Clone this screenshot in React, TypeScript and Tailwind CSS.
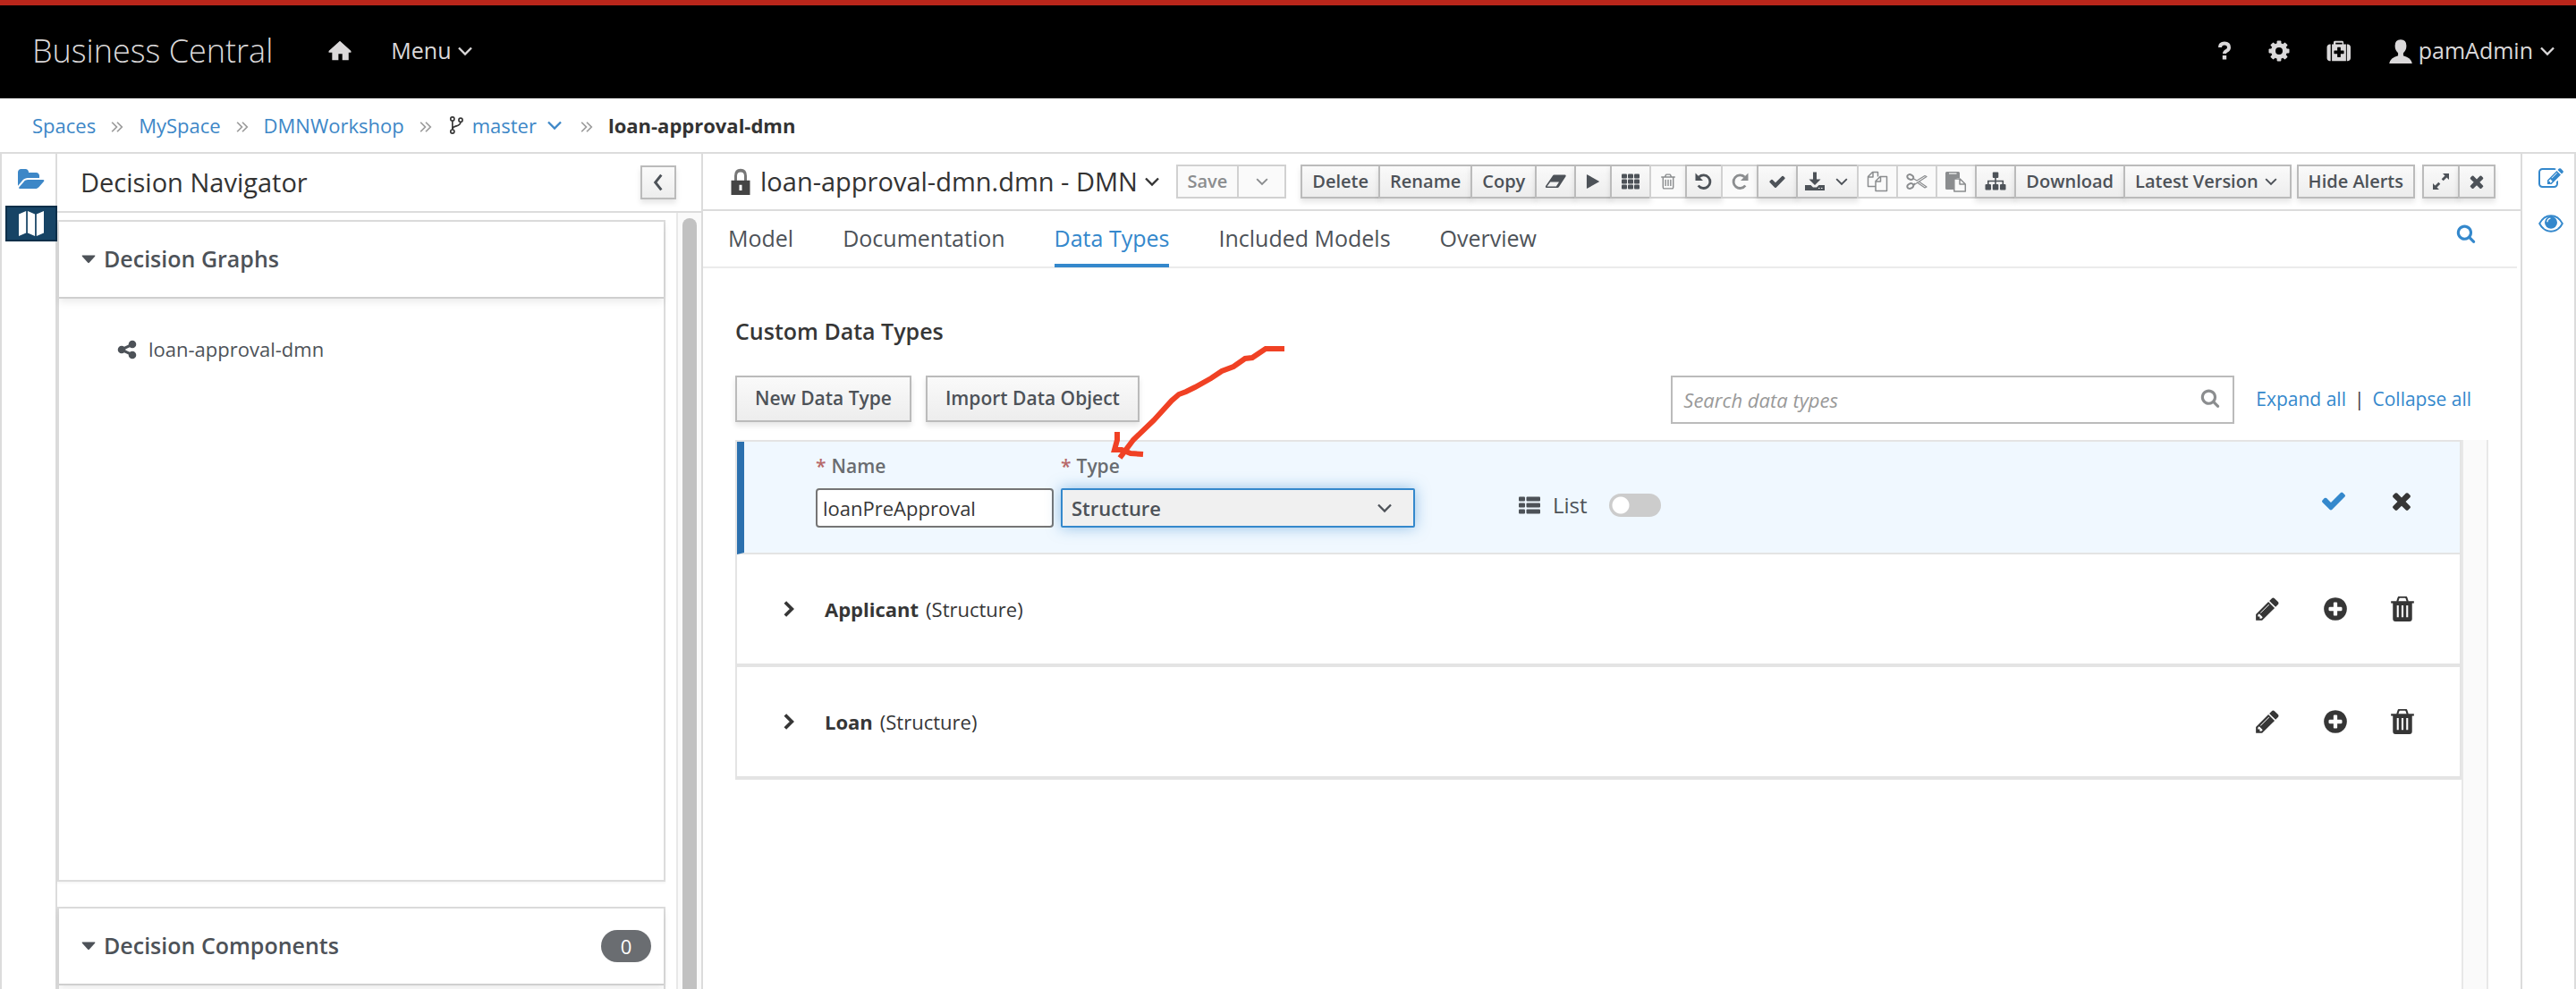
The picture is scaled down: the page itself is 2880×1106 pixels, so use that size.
import type { ReactNode } from "react";

const paths = {
  check: "M1671 566q0 40-28 68l-724 724-136 136q-28 28-68 28t-68-28l-136-136-362-362q-28-28-28-68t28-68l136-136q28-28 68-28t68 28l294 295 656-657q28-28 68-28t68 28l136 136q28 28 28 68z",
  times: "M1490 1322q0 40-28 68l-136 136q-28 28-68 28t-68-28l-294-294-294 294q-28 28-68 28t-68-28l-136-136q-28-28-28-68t28-68l294-294-294-294q-28-28-28-68t28-68l136-136q28-28 68-28t68 28l294 294 294-294q28-28 68-28t68 28l136 136q28 28 28 68t-28 68l-294 294 294 294q28 28 28 68z",
  play: "M1576 927l-1328 738q-23 13-39.500 3t-16.500-36v-1472q0-26 16.500-36t39.500 3l1328 738q23 13 23 31t-23 31z",
  trashOutline: "M704 736v576q0 14-9 23t-23 9h-64q-14 0-23-9t-9-23v-576q0-14 9-23t23-9h64q14 0 23 9t9 23zm256 0v576q0 14-9 23t-23 9h-64q-14 0-23-9t-9-23v-576q0-14 9-23t23-9h64q14 0 23 9t9 23zm256 0v576q0 14-9 23t-23 9h-64q-14 0-23-9t-9-23v-576q0-14 9-23t23-9h64q14 0 23 9t9 23zm128 724v-948h-896v948q0 22 7 40.500t14.500 27 10.500 8.500h832q3 0 10.500-8.500t14.500-27 7-40.500zm-672-1076h448l-48-117q-7-9-17-11h-317q-10 2-17 11zm928 32v64q0 14-9 23t-23 9h-96v948q0 83-47 143.500t-113 60.500h-832q-66 0-113-58.500t-47-141.500v-952h-96q-14 0-23-9t-9-23v-64q0-14 9-23t23-9h309l70-167q15-37 54-63t79-26h320q40 0 79 26t54 63l70 167h309q14 0 23 9t9 23z",
  share: "M1344 1024q133 0 226.500 93.500t93.500 226.500-93.500 226.500-226.500 93.500-226.500-93.500-93.500-226.500q0-12 2-34l-360-180q-92 86-218 86-133 0-226.500-93.500t-93.500-226.500 93.500-226.500 226.500-93.500q126 0 218 86l360-180q-2-22-2-34 0-133 93.500-226.500t226.500-93.500 226.500 93.500 93.500 226.500-93.500 226.500-226.500 93.500q-126 0-218-86l-360 180q2 22 2 34t-2 34l360 180q92-86 218-86z",
  search: "M1216 832q0-185-131.500-316.500t-316.500-131.500-316.500 131.500-131.500 316.500 131.500 316.500 316.500 131.500 316.500-131.500 131.500-316.500zm512 832q0 52-38 90t-90 38q-54 0-90-38l-343-342q-179 124-399 124-143 0-273.500-55.500t-225-150-150-225-55.500-273.500 55.500-273.500 150-225 225-150 273.500-55.500 273.500 55.500 225 150 150 225 55.500 273.500q0 220-124 399l343 343q37 37 37 90z",
  folder: "M1879 952q0 31-31 66l-336 396q-43 51-120.500 86.500t-143.500 35.500h-1088q-34 0-60.500-13t-26.500-43q0-31 31-66l336-396q43-51 120.500-86.500t143.500-35.500h1088q34 0 60.500 13t26.500 43zm-343-344v160h-832q-94 0-197 47.500t-164 119.500l-337 396-5 6q0-4-.5-12.500t-.5-12.500v-960q0-92 66-158t158-66h320q92 0 158 66t66 158v32h544q92 0 158 66t66 158z",
  edit: "M888 1184l116-116-152-152-116 116v56h96v96h56zm440-720q-16-16-33 1l-350 350q-17 17-1 33t33-1l350-350q17-17 1-33zm80 594v190q0 119-84.500 203.500t-203.500 84.500h-832q-119 0-203.500-84.500t-84.500-203.500v-832q0-119 84.500-203.500t203.500-84.500h832q63 0 117 25 15 7 18 23 3 17-9 29l-49 49q-14 14-32 8-23-6-45-6h-832q-66 0-113 47t-47 113v832q0 66 47 113t113 47h832q66 0 113-47t47-113v-126q0-13 9-22l64-64q15-15 35-7t20 29zm-96-738l288 288-672 672h-288v-288zm444 132l-92 92-288-288 92-92q28-28 68-28t68 28l152 152q28 28 28 68t-28 68z",
  medkit: "M1280 1088v-192q0-14-9-23t-23-9h-224v-224q0-14-9-23t-23-9h-192q-14 0-23 9t-9 23v224h-224q-14 0-23 9t-9 23v192q0 14 9 23t23 9h224v224q0 14 9 23t23 9h192q14 0 23-9t9-23v-224h224q14 0 23-9t9-23zm-640-704h512v-128h-512v128zm-384 0v1280h-64q-92 0-158-66t-66-158v-832q0-92 66-158t158-66h64zm1184 0v1280h-1088v-1280h128v-160q0-40 28-68t68-28h576q40 0 68 28t28 68v160h128zm352 224v832q0 92-66 158t-158 66h-64v-1280h64q92 0 158 66t66 158z",
  plusCircle: "M1344 960v-128q0-26-19-45t-45-19h-256v-256q0-26-19-45t-45-19h-128q-26 0-45 19t-19 45v256h-256q-26 0-45 19t-19 45v128q0 26 19 45t45 19h256v256q0 26 19 45t45 19h128q26 0 45-19t19-45v-256h256q26 0 45-19t19-45zm320-64q0 209-103 385.500t-279.500 279.500-385.500 103-385.500-103-279.500-279.500-103-385.500 103-385.500 279.500-279.500 385.500-103 385.500 103 279.500 279.500 103 385.500z",
  pencil: "M491 1536l91-91-235-235-91 91v107h128v128h107zm523-928q0-22-22-22-10 0-17 7l-542 542q-7 7-7 17 0 22 22 22 10 0 17-7l542-542q7-7 7-17zm-54-192l416 416-832 832h-416v-416zm683 96q0 53-37 90l-166 166-416-416 166-165q36-38 90-38 53 0 91 38l235 234q37 39 37 91z",
};

function Glyph({ name, className }: { name: keyof typeof paths; className: string }) {
  return (
    <svg viewBox="0 0 1792 1792" fill="currentColor" className={`shrink-0 overflow-visible ${className}`} aria-hidden="true">
      <path d={paths[name]} />
    </svg>
  );
}

function Drawing({ className, children }: { className: string; children: ReactNode }) {
  return (
    <svg viewBox="0 0 24 24" fill="currentColor" className={`shrink-0 ${className}`} aria-hidden="true">
      {children}
    </svg>
  );
}

function AngleDown({ className }: { className: string }) {
  return (
    <Drawing className={className}>
      <path d="M5 8.500l7 7 7-7" fill="none" stroke="currentColor" strokeWidth="2.300" />
    </Drawing>
  );
}

function Eraser() {
  return (
    <Drawing className="size-6">
      <path fillRule="evenodd" d="M10.500 4.500h12q1.800.3.900 2l-7.500 11.500q-.6 1-1.700 1H2q-1.600-.3-.9-2L9 5.500q.5-1 1.500-1zM6.300 12.500l-3.700 5h10.200l3.200-5z" />
    </Drawing>
  );
}

function Grid() {
  return (
    <Drawing className="size-6">
      {[3, 9, 15].map((y) => [2, 9, 16].map((x) => <rect key={`${x}-${y}`} x={x} y={y + 0.5} width="6" height="5" rx="1" />))}
    </Drawing>
  );
}

function Redo({ className = "size-6" }: { className?: string }) {
  return (
    <Drawing className={className}>
      <path d="M18.300 16.500A7.300 7.300 0 1 1 17.500 7" fill="none" stroke="currentColor" strokeWidth="2.800" />
      <path d="M21.500 2.500v8.500H13z" />
    </Drawing>
  );
}

function Export() {
  return (
    <Drawing className="size-6">
      <path d="M10 1.500h4v8h4.500L12 16 5.500 9.500H10z" />
      <path d="M1 16h6.500l2.500 2.500h4l2.500-2.500H23v6H1z" />
      <path d="M16 19.500h1.500M19 19.500h1.500" stroke="#f2f2f2" strokeWidth="1.200" />
    </Drawing>
  );
}

function CopyFiles() {
  return (
    <Drawing className="size-6">
      <g fill="none" stroke="currentColor" strokeWidth="1.500" strokeLinejoin="round">
        <path d="M10 17.500H1.500V6.500l5-5h6v5M7 1.500v5.500H1.500" />
        <path d="M10 11.500l5-5h7.500v16H10zM15.500 6.500v5.500H10" />
      </g>
    </Drawing>
  );
}

function Cut() {
  return (
    <Drawing className="size-6">
      <g fill="none" stroke="currentColor">
        <ellipse cx="4.800" cy="7" rx="3.600" ry="2.700" strokeWidth="2" transform="rotate(25 4.800 7)" />
        <ellipse cx="4.800" cy="17" rx="3.600" ry="2.700" strokeWidth="2" transform="rotate(-25 4.800 17)" />
        <path d="M8 8.500l4 2.500 9-5.500 2 1-13 8.500-2 1.500M8 15.500l2-1.500M13 13.500l8 5.500 2-1-8-5.500" strokeWidth="1.200" strokeLinejoin="round" />
      </g>
    </Drawing>
  );
}

function Paste() {
  return (
    <Drawing className="size-6">
      <path d="M0 2.500Q0 1 1.500 1h13Q16 1 16 2.500V8h-3l-4 4v9H1.500Q0 21 0 19.500z" />
      <path d="M9.800 9h6.500l6 6v8H9.800zM16 9v6h6.300" fill="#fafafa" stroke="currentColor" strokeWidth="1.500" strokeLinejoin="round" />
      <path d="M4 3h8.500" stroke="#fafafa" strokeWidth="1.200" />
    </Drawing>
  );
}

function Sitemap() {
  return (
    <Drawing className="size-6">
      <rect x="8.800" y="1.500" width="6.500" height="6.500" rx="1" />
      <rect x="0.500" y="15" width="6.500" height="6.500" rx="1" />
      <rect x="8.800" y="15" width="6.500" height="6.500" rx="1" />
      <rect x="17" y="15" width="6.500" height="6.500" rx="1" />
      <path d="M12 7v9M3.800 16v-4.500h16.500V16" fill="none" stroke="currentColor" strokeWidth="1.600" />
    </Drawing>
  );
}

function Expand() {
  return (
    <Drawing className="size-6">
      <path d="M14 3h7v7l-2.500-2.500-3.800 3.800-2-2L16.500 5.500zM10 21H3v-7l2.500 2.500 3.800-3.800 2 2L7.500 18.500z" />
    </Drawing>
  );
}

function SolidTrash() {
  return (
    <Drawing className="size-7">
      <path d="M1 4.500h22v2H1z" />
      <path d="M7 5l1.200-3.600Q8.500.5 9.500.5h5q1 0 1.300.9L17 5" fill="none" stroke="currentColor" strokeWidth="1.800" />
      <path fillRule="evenodd" d="M2.800 6h18.400v15.500q0 2.500-2.500 2.500H5.300q-2.500 0-2.500-2.500zM6.600 8.500v11.500h1.800V8.500zm4.500 0v11.500h1.800V8.500zm4.500 0v11.500h1.800V8.500z" />
    </Drawing>
  );
}

function Chevron() {
  return (
    <Drawing className="size-5">
      <path d="M7 3l9 9-9 9" fill="none" stroke="currentColor" strokeWidth="4.500" />
    </Drawing>
  );
}

function ListIcon() {
  return (
    <Drawing className="size-6">
      {[3, 10, 17].map((y) => (
        <g key={y}>
          <rect x="0" y={y - 0.5} width="7" height="5" rx="1" />
          <rect x="8.500" y={y - 0.5} width="15.500" height="5" rx="1" />
        </g>
      ))}
    </Drawing>
  );
}

type ToolProps = { label?: string; title?: string; disabled?: boolean; size?: string; children?: ReactNode };

function Tool({ label, title, disabled, size = "px-[11px]", children }: ToolProps) {
  const tone = disabled
    ? "border-[#d1d1d1] bg-[#fafafa] text-[#8b8d8f]"
    : "border-[#bbb] bg-linear-to-b from-[#fafafa] to-[#ededed] text-[#4d5258] shadow-[0_4px_6px_rgba(3,3,3,0.1)]";
  return (
    <button type="button" aria-label={title} disabled={disabled} className={`-ml-[2px] flex h-[38px] items-center justify-center border-2 text-[20px] font-semibold whitespace-nowrap ${size} ${tone}`}>
      {label}
      {children}
    </button>
  );
}

function Toolbar() {
  return (
    <div className="flex shrink-0 items-start">
      <Tool label="Save" disabled />
      <Tool title="Save options" disabled size="w-[55px]"><AngleDown className="size-5" /></Tool>
      <div className="ml-[18px] flex">
        <Tool label="Delete" />
        <Tool label="Rename" />
        <Tool label="Copy" />
        <Tool title="Clear" size="w-[46px]"><Eraser /></Tool>
        <Tool title="Run" size="w-[42px]"><Glyph name="play" className="size-[18px]" /></Tool>
        <Tool title="Grid" size="w-[46px]"><Grid /></Tool>
        <Tool title="Remove" disabled size="w-[42px]"><Glyph name="trashOutline" className="size-5" /></Tool>
        <Tool title="Undo" size="w-[42px]"><Redo className="size-6 -scale-x-100" /></Tool>
        <Tool title="Redo" disabled size="w-[42px]"><Redo /></Tool>
        <Tool title="Validate" size="w-[46px]"><Glyph name="check" className="size-5" /></Tool>
        <Tool title="Export" size="w-[70px] gap-2"><Export /><AngleDown className="size-5" /></Tool>
        <Tool title="Copy selection" disabled size="w-[46px]"><CopyFiles /></Tool>
        <Tool title="Cut selection" disabled size="w-[46px]"><Cut /></Tool>
        <Tool title="Paste selection" disabled size="w-[46px]"><Paste /></Tool>
        <Tool title="Layout" size="w-[46px]"><Sitemap /></Tool>
        <Tool label="Download" />
        <Tool label="Latest Version" size="gap-1 px-[11px]"><AngleDown className="size-5" /></Tool>
      </div>
      <div className="ml-2 flex"><Tool label="Hide Alerts" /></div>
      <div className="ml-[10px] flex">
        <Tool title="Maximize" size="w-[42px]"><Expand /></Tool>
        <Tool title="Close" size="w-[42px]"><Glyph name="times" className="size-[22px]" /></Tool>
      </div>
    </div>
  );
}

function Header() {
  return (
    <header className="flex h-[110px] shrink-0 items-center border-t-6 border-[#b9261b] bg-black pb-[2px] text-[25px] text-[#dbd9da]">
      <span className="ml-9 text-[36px] font-light">Business Central</span>
      <a href="#home" aria-label="Home" className="ml-[62px]">
        <Drawing className="size-[26px]"><path d="M12 1.500l11.500 10.500v1.500H21v8h-6.500V15h-4v6.500H4v-8H.5V12z" /></Drawing>
      </a>
      <button type="button" className="ml-11 flex items-center gap-1">Menu<AngleDown className="size-6" /></button>
      <div className="mr-5 ml-auto flex items-center">
        <button type="button" aria-label="Help" className="flex">
          <Drawing className="size-6">
            <path d="M7 8Q7 3.500 12 3.500T17 8q0 2.500-2.500 3.800T12 15" fill="none" stroke="currentColor" strokeWidth="4" />
            <rect x="9.800" y="17" width="4.400" height="4.500" />
          </Drawing>
        </button>
        <button type="button" aria-label="Settings" className="ml-[37px] flex">
          <Drawing className="size-6">
            <circle cx="12" cy="12" r="6.500" fill="none" stroke="currentColor" strokeWidth="5" />
            {[0, 45, 90, 135, 180, 225, 270, 315].map((a) => <rect key={a} x="9.600" y="0.500" width="4.800" height="5" rx="1" transform={`rotate(${a} 12 12)`} />)}
          </Drawing>
        </button>
        <button type="button" aria-label="Support" className="ml-[42px] flex"><Glyph name="medkit" className="size-[26px]" /></button>
        <button type="button" className="ml-[42px] flex items-center">
          <Drawing className="size-7"><path d="M12 1q5.500 0 5.500 6 0 4-3 7v2.500q7.500 2 8.500 7.500H1Q2 18.500 9.500 16.500V14Q6.500 11 6.500 7q0-6 5.500-6z" /></Drawing>
          <span className="ml-[6px]">pamAdmin</span>
          <AngleDown className="ml-1 size-6" />
        </button>
      </div>
    </header>
  );
}

function Divider() {
  return (
    <Drawing className="mt-1 size-[14px] text-[#9c9c9c]">
      <path d="M2 3l9 9-9 9M12 3l9 9-9 9" fill="none" stroke="currentColor" strokeWidth="3" />
    </Drawing>
  );
}

function Breadcrumbs() {
  return (
    <nav aria-label="Breadcrumb" className="flex h-[62px] shrink-0 items-center gap-[17px] border-b-2 border-[#dcdcdc] px-9 text-[22px] text-[#3d87c7]">
      <a href="#spaces">Spaces</a><Divider />
      <a href="#myspace">MySpace</a><Divider />
      <a href="#project">DMNWorkshop</a><Divider />
      <button type="button" className="flex items-center">
        <Drawing className="mr-2 size-5 text-[#363636]">
          <g fill="none" stroke="currentColor" strokeWidth="2"><circle cx="7" cy="3.500" r="2.500" /><circle cx="7" cy="20.500" r="2.500" /><circle cx="18" cy="5" r="2.500" /><path d="M7 6v12M18 7.500q0 4-5.500 5.500T7 17.500" /></g>
        </Drawing>
        master
        <AngleDown className="ml-2 size-6" />
      </button>
      <Divider />
      <span className="font-bold text-[#333]">loan-approval-dmn</span>
    </nav>
  );
}

function LeftDock() {
  return (
    <aside className="flex w-16 shrink-0 flex-col items-end border-r-2 border-l-2 border-[#dcdcdc]">
      <button type="button" aria-label="Project explorer" className="flex h-[58px] w-[56px] items-center justify-center text-[#3d87c7]">
        <Glyph name="folder" className="size-7" />
      </button>
      <button type="button" aria-label="Decision navigator" className="-mr-[2px] flex h-10 w-[58px] items-center justify-center border-2 border-[#0d2f49] bg-[#174465] text-white">
        <Drawing className="size-7"><path d="M0 3l7-3v21l-7 3zM8.500 0L15.500 3v21l-7-3zM17 3l7-3v21l-7 3z" /></Drawing>
      </button>
    </aside>
  );
}

function PanelCard({ title, badge, className, children }: { title: string; badge?: string; className: string; children?: ReactNode }) {
  return (
    <section className={`border-2 border-[#dcdcdc] shadow-[0_2px_2px_rgba(3,3,3,0.04)] ${className}`}>
      <h2 className="flex h-[86px] items-center border-b-2 border-[#cfcfcf] pr-[14px] pl-6 text-[25px] font-semibold text-[#4d5258] shadow-[0_4px_8px_rgba(3,3,3,0.08)]">
        <Drawing className="size-[18px]"><path d="M3 6h18q1.500 0 .5 1.500L13 17q-1 1-2 0L2.500 7.500Q1.500 6 3 6z" /></Drawing>
        <span className="ml-2">{title}</span>
        {badge && <span className="ml-auto flex h-9 w-14 items-center justify-center rounded-full bg-[#6a6d71] text-[22px] font-normal text-white">{badge}</span>}
      </h2>
      {children}
    </section>
  );
}

function Navigator() {
  return (
    <aside className="flex w-[722px] shrink-0 flex-col border-r-2 border-[#dcdcdc]">
      <div className="flex h-[66px] shrink-0 items-center justify-between border-b-2 border-[#dcdcdc] pr-7 pl-[26px]">
        <h1 className="text-[29px] text-[#333]">Decision Navigator</h1>
        <button type="button" aria-label="Collapse panel" className="flex h-[38px] w-10 items-center justify-center border-2 border-[#bbb] bg-linear-to-b from-[#fafafa] to-[#ededed] text-[#4d5258] shadow-[0_4px_6px_rgba(3,3,3,0.1)]">
          <Drawing className="size-5"><path d="M16 2l-8 10 8 10" fill="none" stroke="currentColor" strokeWidth="3.500" /></Drawing>
        </button>
      </div>
      <div className="flex min-h-0 flex-1">
        <div className="flex min-w-0 flex-1 flex-col gap-7 pt-2 pr-3">
          <PanelCard title="Decision Graphs" className="h-[740px] shrink-0">
            <a href="#graph" className="mt-10 ml-16 flex items-center gap-3 text-[22px] text-[#4d5258]">
              <Glyph name="share" className="size-6" />
              loan-approval-dmn
            </a>
          </PanelCard>
          <PanelCard title="Decision Components" badge="0" className="h-[300px] shrink-0" />
        </div>
        <div className="w-[28px] shrink-0 border-l-2 border-[#e8e8e8] bg-[#fafafa] px-[5px] pt-[6px]">
          <div className="h-full w-4 rounded-t-full bg-[#c1c1c1]" />
        </div>
      </div>
    </aside>
  );
}

function RowActions() {
  return (
    <div className="ml-auto flex items-center text-[#363636]">
      <button type="button" aria-label="Edit"><Glyph name="pencil" className="size-[30px]" /></button>
      <button type="button" aria-label="Add field" className="ml-[46px]"><Glyph name="plusCircle" className="size-[30px]" /></button>
      <button type="button" aria-label="Remove" className="ml-[46px]"><SolidTrash /></button>
    </div>
  );
}

function TypeRow({ name, kind }: { name: string; kind: string }) {
  return (
    <li className="flex h-[126px] items-center border-b-4 border-[#e4e4e4] pr-[50px] pl-12 text-[22px] text-[#363636]">
      <button type="button" aria-label={`Expand ${name}`} className="flex"><Chevron /></button>
      <span className="ml-[30px] font-bold">{name}</span>
      <span className="ml-2">({kind})</span>
      <RowActions />
    </li>
  );
}

function EditRow() {
  return (
    <li className="flex h-[126px] border-b-2 border-l-8 border-[#e4e4e4] border-l-[#2b70ae] bg-[#f0f8ff] pr-[50px] pl-20 text-[22px] text-[#4d5258]">
      <div className="flex flex-col pt-3">
        <label htmlFor="type-name" className="flex h-8 items-center gap-[6px] text-[21px] font-semibold text-[#696c70]"><span className="text-[#b76a6a]">*</span>Name</label>
        <input id="type-name" defaultValue="loanPreApproval" className="mt-2 h-11 w-[266px] rounded-sm border-2 border-[#757575] bg-white px-[6px] text-[#363636]" />
      </div>
      <div className="relative ml-2 flex flex-col pt-3">
        <label htmlFor="type-kind" className="flex h-8 items-center gap-[6px] text-[21px] font-semibold text-[#696c70]"><span className="text-[#b76a6a]">*</span>Type</label>
        <select id="type-kind" className="mt-2 h-11 w-[396px] appearance-none rounded-xs border-2 border-[#3488cc] bg-[#f0f0f0] px-[10px] font-semibold text-[#4d5258] shadow-[0_0_16px_rgba(52,136,204,0.5)]">
          <option>Structure</option>
        </select>
        <AngleDown className="pointer-events-none absolute right-[22px] bottom-[38px] size-6" />
      </div>
      <label className="ml-[116px] flex h-[142px] items-center gap-[14px] text-[24px]">
        <ListIcon />
        List
        <input type="checkbox" role="switch" className="ml-[10px] h-[26px] w-[58px] appearance-none rounded-full bg-[#ccc] bg-[radial-gradient(circle_at_13px_13px,white_9px,transparent_10px)]" />
      </label>
      <div className="ml-auto flex h-[132px] items-center">
        <button type="button" aria-label="Save" className="text-[#3488cc]"><Glyph name="check" className="size-[30px]" /></button>
        <button type="button" aria-label="Cancel" className="ml-[46px] text-[#363636]"><Glyph name="times" className="size-[30px]" /></button>
      </div>
    </li>
  );
}

const tabs = ["Model", "Documentation", "Data Types", "Included Models", "Overview"];

function HandDrawnArrow() {
  return (
    <svg viewBox="0 0 200 130" className="pointer-events-none absolute top-[-38px] left-[420px] h-[130px] w-[200px] overflow-visible" fill="none" stroke="#f04124" strokeWidth="6" aria-hidden="true">
      <path d="M194 8H173L158 18L150 19L137 28L124 33L112 41L94 51L84 56L76 59L68 66L48 88L25 110L10 130" />
      <path d="M7 101V110L4 121L12 121L22 125L36 126" />
    </svg>
  );
}

function DataTypes() {
  const buttonClass = "h-[52px] border-2 border-[#bbb] bg-linear-to-b from-[#fafafa] to-[#ededed] px-5 text-[21px] font-semibold text-[#4d5258] shadow-[0_4px_6px_rgba(3,3,3,0.1)]";
  return (
    <div className="flex min-h-0 flex-1 flex-col pr-9 pl-9">
      <h2 className="mt-[52px] h-9 text-[25px] leading-9 font-semibold text-[#363636]">Custom Data Types</h2>
      <div className="relative mt-8 flex h-[54px] shrink-0 items-start">
        <button type="button" className={buttonClass}>New Data Type</button>
        <button type="button" className={`ml-4 ${buttonClass}`}>Import Data Object</button>
        <div className="relative ml-auto">
          <input type="search" aria-label="Search data types" placeholder="Search data types" className="h-[54px] w-[630px] border-2 border-[#bbb] px-3 text-[22px] placeholder:text-[#999] placeholder:italic" />
          <Glyph name="search" className="absolute top-[14px] right-4 size-[22px] text-[#8b8d8f]" />
        </div>
        <div className="mr-[19px] ml-6 flex h-[54px] items-center gap-[9px] text-[21px] text-[#3488cc]">
          <a href="#expand">Expand all</a><span className="text-[#363636]">|</span><a href="#collapse">Collapse all</a>
        </div>
        <HandDrawnArrow />
      </div>
      <div className="mt-[18px] flex min-h-0 flex-1">
        <ul className="min-w-0 flex-1 self-start border-t-2 border-r-2 border-l-2 border-[#e4e4e4]">
          <EditRow />
          <TypeRow name="Applicant" kind="Structure" />
          <TypeRow name="Loan" kind="Structure" />
        </ul>
        <div className="w-[30px] shrink-0 border-r-2 border-l-2 border-[#e8e8e8] bg-[#fafafa]" />
      </div>
    </div>
  );
}

function Editor() {
  return (
    <main className="flex min-w-0 flex-1 flex-col">
      <div className="flex h-16 shrink-0 items-center justify-between border-b-2 border-[#dcdcdc] pr-7 pl-[30px]">
        <h1 className="flex items-center text-[29px] whitespace-nowrap text-[#333]">
          <Drawing className="mr-[10px] size-6 scale-y-125 text-[#444]">
            <path d="M6.500 12V7q0-5 5.500-5t5.500 5v5" fill="none" stroke="#777" strokeWidth="3" />
            <path fillRule="evenodd" d="M1.500 11h21v13h-21zM10.500 15v5h3v-5z" />
          </Drawing>
          loan-approval-dmn.dmn - DMN
          <AngleDown className="ml-1 size-6" />
        </h1>
        <Toolbar />
      </div>
      <div className="mr-1 flex h-16 shrink-0 items-center border-b-2 border-[#ebebeb] pr-[46px] pl-7">
        <div role="tablist" className="flex h-16 gap-[55px] text-[25px] text-[#4d5258]">
          {tabs.map((t) => (
            <button key={t} type="button" role="tab" aria-selected={t === "Data Types"} className={t === "Data Types" ? "border-b-4 border-[#3488cc] pt-1 text-[#3488cc]" : "border-b-4 border-transparent pt-1"}>{t}</button>
          ))}
        </div>
        <button type="button" aria-label="Search" className="mb-3 ml-auto text-[#3488cc]"><Glyph name="search" className="size-[22px]" /></button>
      </div>
      <DataTypes />
    </main>
  );
}

function RightDock() {
  return (
    <aside className="flex w-[62px] shrink-0 flex-col items-center gap-[22px] border-r-2 border-l-2 border-[#dcdcdc] pt-[14px] pl-[6px] text-[#3488cc]">
      <button type="button" aria-label="Properties"><Glyph name="edit" className="size-7" /></button>
      <button type="button" aria-label="Preview">
        <Drawing className="size-7">
          <path d="M1 12Q5 4.500 12 4.500T23 12q-4 7.500-11 7.500T1 12z" fill="none" stroke="currentColor" strokeWidth="1.600" />
          <circle cx="12" cy="11" r="6" />
          <path d="M8.500 10.500q.2-3 3-3.500" fill="none" stroke="white" strokeWidth="1.200" />
        </Drawing>
      </button>
    </aside>
  );
}

export default function App() {
  return (
    <div className="flex h-screen flex-col overflow-hidden bg-white font-['Open_Sans',sans-serif]">
      <Header />
      <Breadcrumbs />
      <div className="flex min-h-0 flex-1">
        <LeftDock />
        <Navigator />
        <Editor />
        <RightDock />
      </div>
    </div>
  );
}
